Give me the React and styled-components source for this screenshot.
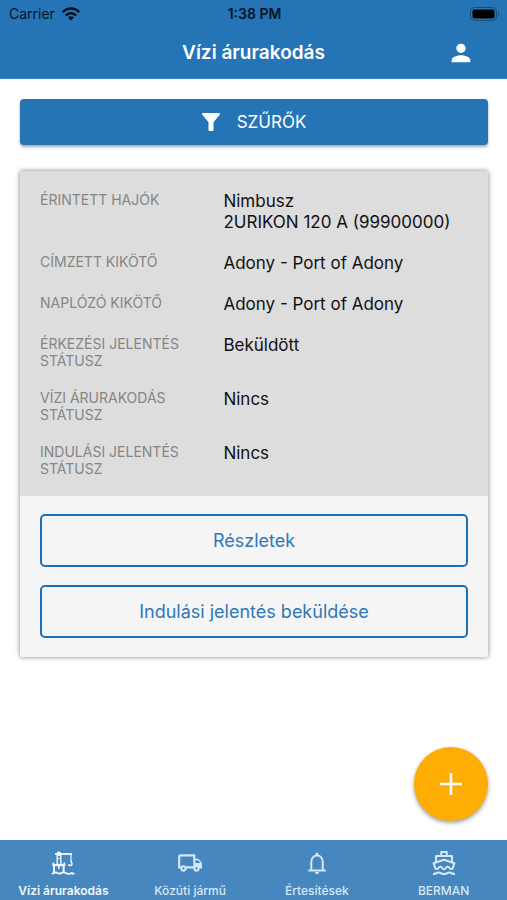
import React from "react";
import styled, { createGlobalStyle } from "styled-components";
import { MdPerson, MdOutlineLocalShipping } from "react-icons/md";

const GlobalStyle = createGlobalStyle`
  * {
    box-sizing: border-box;
  }
  body {
    margin: 0;
    background-color: #fff;
    font-family: Inter, "Liberation Sans", sans-serif;
    color: #111;
  }
  button {
    font-family: inherit;
    cursor: pointer;
  }
`;

const Page = styled.div`
  min-height: 100vh;
  display: flex;
  flex-direction: column;
`;

const Header = styled.header`
  background-color: #2574b6;
  border-bottom: 1px solid #3f86c1;
`;

const StatusBar = styled.div`
  display: grid;
  grid-template-columns: 1fr auto 1fr;
  align-items: center;
  height: 27px;
  padding: 0 7px 0 9px;
  font-size: 14px;
  color: #06141f;
`;

const Carrier = styled.span`
  display: flex;
  align-items: center;
  gap: 7px;
`;

const Clock = styled.span`
  font-weight: 600;
`;

const BatteryIcon = styled.svg`
  justify-self: end;
`;

const TitleBar = styled.div`
  display: grid;
  grid-template-columns: 32px 1fr 32px;
  align-items: center;
  height: 51px;
  padding: 0 30px;
`;

const Title = styled.h1`
  grid-column: 2;
  margin: 0;
  font-size: 19px;
  line-height: 24px;
  font-weight: 600;
  text-align: center;
  color: #fff;
`;

const ProfileButton = styled.button`
  display: flex;
  align-items: center;
  justify-content: center;
  height: 32px;
  padding: 0;
  border: none;
  background: none;
  color: #fff;
`;

const Main = styled.main`
  flex: 1;
  display: flex;
  flex-direction: column;
  gap: 26px;
  padding: 20px 19px 20px 20px;
`;

const FilterButton = styled.button`
  display: flex;
  align-items: center;
  justify-content: center;
  gap: 17px;
  height: 46px;
  border: none;
  border-radius: 4px;
  background-color: #2574b6;
  box-shadow: 0 2px 3px rgba(0, 0, 0, 0.35);
  font-size: 17px;
  color: #fff;
`;

const Card = styled.section`
  border-radius: 2px;
  background-color: #f5f5f5;
  box-shadow: 0 0 5px rgba(0, 0, 0, 0.5);
`;

const Details = styled.dl`
  display: flex;
  flex-direction: column;
  gap: 20px;
  margin: 0;
  padding: 20px 20px 19px;
  background-color: #ddd;
`;

const Field = styled.div`
  display: grid;
  grid-template-columns: 3fr 4fr;
`;

const Label = styled.dt`
  padding-right: 32px;
  font-size: 14px;
  line-height: 17px;
  text-transform: uppercase;
  color: #858585;
`;

const Value = styled.dd`
  margin: 0;
  font-size: 17px;
  line-height: 21px;
  white-space: pre-line;
`;

const Actions = styled.div`
  display: flex;
  flex-direction: column;
  gap: 18px;
  padding: 18px 20px 19px;
`;

const OutlineButton = styled.button`
  height: 53px;
  border: 2px solid #1e6fb3;
  border-radius: 5px;
  background-color: transparent;
  font-size: 18px;
  color: #2f78b7;
`;

const AddButton = styled.button`
  position: fixed;
  right: 19px;
  bottom: 79px;
  display: flex;
  align-items: center;
  justify-content: center;
  width: 74px;
  height: 74px;
  padding: 0;
  border: none;
  border-radius: 50%;
  background-color: #ffad05;
  box-shadow: 0 2px 4px rgba(0, 0, 0, 0.4);
`;

const TabBar = styled.nav`
  position: sticky;
  bottom: 0;
  display: grid;
  grid-template-columns: repeat(4, 1fr);
  height: 60px;
  background-color: #4587be;
`;

const Tab = styled.a`
  display: flex;
  flex-direction: column;
  align-items: center;
  gap: 7px;
  padding-top: 10px;
  font-size: 12px;
  line-height: 16px;
  font-weight: ${(props) => (props.$active ? 600 : 500)};
  white-space: nowrap;
  text-decoration: none;
  color: ${(props) => (props.$active ? "#f1f8ff" : "#d5e8f8")};
`;

const WifiIcon = () => (
  <svg width="18" height="14" viewBox="0 0 18 14" aria-hidden="true">
    <g fill="none" stroke="currentColor" strokeWidth="2.5">
      <path d="M0.8 5.2C5.4 0.4 12.6 0.4 17.2 5.2" />
      <path d="M3.8 8.5C6.7 5.5 11.3 5.5 14.2 8.5" />
    </g>
    <path d="M9 13.6L5.9 10.4C7.6 8.8 10.4 8.8 12.1 10.4Z" fill="currentColor" />
  </svg>
);

const Battery = () => (
  <BatteryIcon width="30" height="14" viewBox="0 0 30 14" aria-hidden="true">
    <rect x="0.5" y="0.5" width="26" height="13" rx="4" fill="none" stroke="#174d79" />
    <rect x="2.5" y="2.5" width="22" height="9" rx="2" fill="#000" />
    <path d="M28 5C29.6 5.5 29.6 8.5 28 9Z" fill="#174d79" />
  </BatteryIcon>
);

const FilterIcon = () => (
  <svg width="18" height="18" viewBox="0 0 18 18" aria-hidden="true">
    <path
      d="M1 0H17C18 0 18.3 1 17.7 1.8L11.5 9.2V17C11.5 17.7 11 18 10.4 18H7.6C7 18 6.5 17.7 6.5 17V9.2L0.3 1.8C-0.3 1 0 0 1 0Z"
      fill="currentColor"
    />
  </svg>
);

const PlusIcon = () => (
  <svg width="22" height="22" viewBox="0 0 22 22" aria-hidden="true">
    <path d="M11 0V22M0 11H22" stroke="#fff" strokeWidth="2.6" />
  </svg>
);

const CraneIcon = () => (
  <svg width="26" height="26" viewBox="0 0 26 26" fill="none" stroke="currentColor" aria-hidden="true">
    <path d="M5 4H22" strokeWidth="1.8" />
    <path d="M21 4V11.5" strokeWidth="1.2" />
    <path d="M21 11C21 12.5 22 12.6 22 14C22 16.2 18.6 16 18.6 14" strokeWidth="1.5" />
    <path d="M7.2 4V14M10.8 4V14" strokeWidth="1.4" />
    <path d="M7 8.5H11" strokeWidth="1" />
    <path d="M3.4 12.6V16M14.4 12.6V16" strokeWidth="1.6" />
    <path d="M2.6 15H15.2" strokeWidth="2.2" />
    <path d="M4 15V22.5M13.6 15V22.5" strokeWidth="2" />
    <path d="M8.8 16V19" strokeWidth="1.6" />
    <path d="M2 24C4.5 22 6 22 8 23.3C10 24.6 11.5 22 14 22.4C16.5 22.8 17 24.8 19.5 23.7C21 23 22.5 23.1 24.5 24" strokeWidth="1.8" />
    <circle cx="8.9" cy="3.7" r="2.3" fill="currentColor" stroke="none" />
  </svg>
);

const BellIcon = () => (
  <svg width="26" height="26" viewBox="0 0 26 26" aria-hidden="true">
    <path
      d="M7.3 19.5V12.2C7.3 8.5 9.6 5.5 13 5.5C16.4 5.5 18.7 8.5 18.7 12.2V19.5M4.3 20.4H21.7"
      fill="none"
      stroke="currentColor"
      strokeWidth="2"
    />
    <path d="M11.6 5V4C11.6 2.2 14.4 2.2 14.4 4V5ZM10.9 22H15.1C15.1 24.8 10.9 24.8 10.9 22Z" fill="currentColor" />
  </svg>
);

const BoatIcon = () => (
  <svg
    width="26"
    height="26"
    viewBox="0 0 26 26"
    fill="none"
    stroke="currentColor"
    strokeWidth="2"
    strokeLinejoin="round"
    aria-hidden="true"
  >
    <path d="M10.2 5.5V2H15.8V5.5" />
    <path d="M5 12V6H21V12" />
    <path d="M4.8 19.5L2.6 13.2L13 9.8L23.4 13.2L21.2 19.5" />
    <path d="M4.8 18.6C7 20.2 8 16.4 9.4 16.4C10.8 16.4 11.2 19.4 13 19.4C14.8 19.4 15.2 16.4 16.6 16.4C18 16.4 19 20.2 21.2 18.6" />
    <path d="M2 24C4.5 24 5.5 22.6 7.5 22.6C9.5 22.6 10.5 24 13 24C15.5 24 16.5 22.6 18.5 22.6C20.5 22.6 21.5 24 24 24" />
  </svg>
);

const fields = [
  { label: "Érintett hajók", value: "Nimbusz\n2URIKON 120 A (99900000)" },
  { label: "Címzett kikötő", value: "Adony - Port of Adony" },
  { label: "Naplózó kikötő", value: "Adony - Port of Adony" },
  { label: "Érkezési jelentés státusz", value: "Beküldött" },
  { label: "Vízi árurakodás státusz", value: "Nincs" },
  { label: "Indulási jelentés státusz", value: "Nincs" },
];

const tabs = [
  { label: "Vízi árurakodás", icon: <CraneIcon />, active: true },
  { label: "Közúti jármű", icon: <MdOutlineLocalShipping size={26} /> },
  { label: "Értesítések", icon: <BellIcon /> },
  { label: "BERMAN", icon: <BoatIcon /> },
];

const App = () => {
  return (
    <Page>
      <GlobalStyle />
      <Header>
        <StatusBar>
          <Carrier>
            Carrier
            <WifiIcon />
          </Carrier>
          <Clock>1:38 PM</Clock>
          <Battery />
        </StatusBar>
        <TitleBar>
          <Title>Vízi árurakodás</Title>
          <ProfileButton aria-label="Profil">
            <MdPerson size={28} />
          </ProfileButton>
        </TitleBar>
      </Header>
      <Main>
        <FilterButton>
          <FilterIcon />
          SZŰRŐK
        </FilterButton>
        <Card>
          <Details>
            {fields.map(({ label, value }) => (
              <Field key={label}>
                <Label>{label}</Label>
                <Value>{value}</Value>
              </Field>
            ))}
          </Details>
          <Actions>
            <OutlineButton>Részletek</OutlineButton>
            <OutlineButton>Indulási jelentés beküldése</OutlineButton>
          </Actions>
        </Card>
      </Main>
      <AddButton aria-label="Új">
        <PlusIcon />
      </AddButton>
      <TabBar>
        {tabs.map(({ label, icon, active }) => (
          <Tab key={label} href="#" $active={active}>
            {icon}
            {label}
          </Tab>
        ))}
      </TabBar>
    </Page>
  );
};

export default App;
